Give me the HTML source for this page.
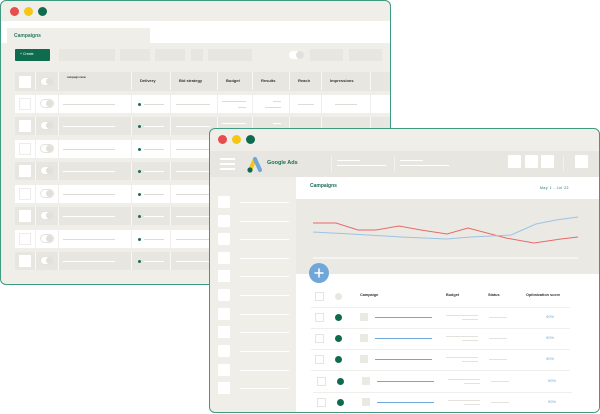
<!DOCTYPE html>
<html><head><meta charset="utf-8"><style>
*{margin:0;padding:0;box-sizing:border-box}
body{width:600px;height:414px;background:#fff;position:relative;overflow:hidden;font-family:"Liberation Sans",sans-serif}
.a{position:absolute}
.win{position:absolute;border:1.5px solid #3f9a82;border-radius:6px;overflow:hidden;background:#efeee9}
.dot{position:absolute;width:9px;height:9px;border-radius:50%}
.r{position:absolute;left:14px;width:376px;height:18px;display:flex}
.r div{height:18px;position:relative;border-right:1px solid rgba(255,255,255,.7)}
.w{background:#fff}.w div{border-right:1px solid #f0efeb}
.g{background:#e8e6e1}
.cb{position:absolute;left:4px;top:3px;width:12px;height:12px;background:#fff}
.w .cb{border:1px solid #eeece8}
.tg{position:absolute;left:4px;top:4px;width:14px;height:9px;border-radius:5px;background:#fff;border:1px solid #e4e2dc}
.tg:after{content:"";position:absolute;right:0;top:0;width:7px;height:7px;border-radius:50%;background:#e2e0da}
.ln{position:absolute;height:1px;background:#dddbd5}
.gd{position:absolute;width:3px;height:3px;border-radius:50%;background:#1b6e55;top:8px;left:6px}
.h{font-size:4px;color:#333;position:absolute;top:6px;left:8px;font-weight:bold}
.fr{position:absolute;left:296px;width:303px;height:21px}
.fr .c{position:absolute;left:18px;top:5px;width:9px;height:9px;border:1px solid #e6e4df;background:#fff}
.fr .d{position:absolute;left:38px;top:6px;width:7px;height:7px;border-radius:50%;background:#0f6b4e}
.fr .s{position:absolute;left:63px;top:5px;width:8px;height:8px;background:#ebe9e4}
.fr .b{position:absolute;left:78px;top:9px;width:57px;height:1px;background:#6fa8d8}
.fr .p{position:absolute;left:249px;top:6px;font-size:4px;color:#6fa8d8}
.fr .l1{position:absolute;left:149px;top:7px;width:32px;height:1px;background:#e4e2dd}
.fr .l2{position:absolute;left:165px;top:11px;width:16px;height:1px;background:#e4e2dd}
.fr .l3{position:absolute;left:192px;top:9px;width:18px;height:1px;background:#e4e2dd}
.fr .sep{position:absolute;left:14px;right:30px;bottom:0;height:1px;background:#efeeea}
.sb{position:absolute;left:8px;width:12px;height:12px;background:#fff;border-radius:1px}
.sl{position:absolute;left:30px;width:49px;height:1px;background:#fff}
</style></head><body>

<!-- back window -->
<div class="win" style="left:0;top:0;width:391px;height:285px">
 <div class="dot" style="left:9px;top:6px;background:#e84c4c"></div>
 <div class="dot" style="left:23px;top:6px;background:#f5c518"></div>
 <div class="dot" style="left:37px;top:6px;background:#0f6b4e"></div>
 <div class="a" style="left:0;top:20px;width:390px;height:22px;background:#fff"></div>
 <div class="a" style="left:6px;top:27px;width:143px;height:15px;background:#efeee9;font-size:5px;color:#2a7a63;padding:5px 7px;font-weight:bold">Campaigns</div>
 <div class="a" style="left:14px;top:48px;width:35px;height:12px;background:#0f6b4e;border-radius:1px;font-size:3.5px;color:#fff;padding:3px 5px">+ Create</div>
 <div class="a" style="left:58px;top:48px;width:56px;height:12px;background:#e8e6e1"></div>
 <div class="a" style="left:119px;top:48px;width:30px;height:12px;background:#e8e6e1"></div>
 <div class="a" style="left:154px;top:48px;width:30px;height:12px;background:#e8e6e1"></div>
 <div class="a" style="left:190px;top:48px;width:12px;height:12px;background:#e8e6e1"></div>
 <div class="a" style="left:207px;top:48px;width:44px;height:12px;background:#e8e6e1"></div>
 <div class="a" style="left:288px;top:50px;width:15px;height:8px;border-radius:4px;background:#fff"><div style="position:absolute;right:0;top:0;width:8px;height:8px;border-radius:50%;background:#e2e0da"></div></div>
 <div class="a" style="left:309px;top:48px;width:33px;height:12px;background:#e8e6e1"></div>
 <div class="a" style="left:348px;top:48px;width:33px;height:12px;background:#e8e6e1"></div>
 <!-- header -->
 <div class="r g" style="top:71px;height:19px">
  <div style="width:21px"><span class="cb" style="top:4px"></span></div>
  <div style="width:23px"><span class="tg" style="top:5px"></span></div>
  <div style="width:73px"><span class="h" style="font-size:2.5px;top:4px">campaign name</span></div>
  <div style="width:39px"><span class="h">Delivery</span></div>
  <div style="width:47px"><span class="h">Bid strategy</span></div>
  <div style="width:35px"><span class="h">Budget</span></div>
  <div style="width:37px"><span class="h">Results</span></div>
  <div style="width:32px"><span class="h">Reach</span></div>
  <div style="width:49px"><span class="h">Impressions</span></div>
  <div style="width:20px;border:0"></div>
 </div>
 <!-- rows -->
 <div class="r w" style="top:94px"><div style="width:21px"><span class="cb"></span></div><div style="width:23px"><span class="tg"></span></div><div style="width:73px"><span class="ln" style="left:4px;top:9px;width:52px"></span></div><div style="width:39px"><span class="gd"></span><span class="ln" style="left:12px;top:9px;width:20px"></span></div><div style="width:47px"><span class="ln" style="left:5px;top:9px;width:34px"></span></div><div style="width:35px"><span class="ln" style="left:4px;top:6px;width:24px"></span><span class="ln" style="left:20px;top:12px;width:8px"></span></div><div style="width:37px"><span class="ln" style="left:20px;top:6px;width:8px"></span><span class="ln" style="left:12px;top:12px;width:16px"></span></div><div style="width:32px"><span class="ln" style="left:8px;top:9px;width:16px"></span></div><div style="width:49px"><span class="ln" style="left:13px;top:9px;width:22px"></span></div><div style="width:20px;border:0"></div></div>
 <div class="r g" style="top:116px"><div style="width:21px"><span class="cb"></span></div><div style="width:23px"><span class="tg"></span></div><div style="width:73px"><span class="ln" style="left:4px;top:9px;width:52px;background:#fff"></span></div><div style="width:39px"><span class="gd"></span><span class="ln" style="left:12px;top:9px;width:20px;background:#fff"></span></div><div style="width:47px"><span class="ln" style="left:5px;top:9px;width:34px;background:#fff"></span></div><div style="width:35px"><span class="ln" style="left:4px;top:6px;width:24px;background:#fff"></span></div><div style="width:37px"><span class="ln" style="left:20px;top:6px;width:8px;background:#fff"></span></div><div style="width:32px"></div><div style="width:49px"></div><div style="width:20px;border:0"></div></div>
 <div class="r w" style="top:139px"><div style="width:21px"><span class="cb"></span></div><div style="width:23px"><span class="tg"></span></div><div style="width:73px"><span class="ln" style="left:4px;top:9px;width:52px"></span></div><div style="width:39px"><span class="gd"></span><span class="ln" style="left:12px;top:9px;width:20px"></span></div><div style="width:47px"><span class="ln" style="left:5px;top:9px;width:34px"></span></div><div style="width:35px"></div><div style="width:37px"></div><div style="width:32px"></div><div style="width:49px"></div><div style="width:20px;border:0"></div></div>
 <div class="r g" style="top:161px"><div style="width:21px"><span class="cb"></span></div><div style="width:23px"><span class="tg"></span></div><div style="width:73px"><span class="ln" style="left:4px;top:9px;width:52px;background:#fff"></span></div><div style="width:39px"><span class="gd"></span><span class="ln" style="left:12px;top:9px;width:20px;background:#fff"></span></div><div style="width:47px"><span class="ln" style="left:5px;top:9px;width:34px;background:#fff"></span></div><div style="width:35px"></div><div style="width:37px"></div><div style="width:32px"></div><div style="width:49px"></div><div style="width:20px;border:0"></div></div>
 <div class="r w" style="top:184px"><div style="width:21px"><span class="cb"></span></div><div style="width:23px"><span class="tg"></span></div><div style="width:73px"><span class="ln" style="left:4px;top:9px;width:52px"></span></div><div style="width:39px"><span class="gd"></span><span class="ln" style="left:12px;top:9px;width:20px"></span></div><div style="width:47px"><span class="ln" style="left:5px;top:9px;width:34px"></span></div><div style="width:35px"></div><div style="width:37px"></div><div style="width:32px"></div><div style="width:49px"></div><div style="width:20px;border:0"></div></div>
 <div class="r g" style="top:206px"><div style="width:21px"><span class="cb"></span></div><div style="width:23px"><span class="tg"></span></div><div style="width:73px"><span class="ln" style="left:4px;top:9px;width:52px;background:#fff"></span></div><div style="width:39px"><span class="gd"></span><span class="ln" style="left:12px;top:9px;width:20px;background:#fff"></span></div><div style="width:47px"><span class="ln" style="left:5px;top:9px;width:34px;background:#fff"></span></div><div style="width:35px"></div><div style="width:37px"></div><div style="width:32px"></div><div style="width:49px"></div><div style="width:20px;border:0"></div></div>
 <div class="r w" style="top:229px"><div style="width:21px"><span class="cb"></span></div><div style="width:23px"><span class="tg"></span></div><div style="width:73px"><span class="ln" style="left:4px;top:9px;width:52px"></span></div><div style="width:39px"><span class="gd"></span><span class="ln" style="left:12px;top:9px;width:20px"></span></div><div style="width:47px"><span class="ln" style="left:5px;top:9px;width:34px"></span></div><div style="width:35px"></div><div style="width:37px"></div><div style="width:32px"></div><div style="width:49px"></div><div style="width:20px;border:0"></div></div>
 <div class="r g" style="top:251px"><div style="width:21px"><span class="cb"></span></div><div style="width:23px"><span class="tg"></span></div><div style="width:73px"><span class="ln" style="left:4px;top:9px;width:52px;background:#fff"></span></div><div style="width:39px"><span class="gd"></span><span class="ln" style="left:12px;top:9px;width:20px;background:#fff"></span></div><div style="width:47px"><span class="ln" style="left:5px;top:9px;width:34px;background:#fff"></span></div><div style="width:35px"></div><div style="width:37px"></div><div style="width:32px"></div><div style="width:49px"></div><div style="width:20px;border:0"></div></div>
</div>

<!-- front window -->
<div class="win" style="left:209px;top:128px;width:391px;height:285px">
 <div class="dot" style="left:8px;top:6px;background:#e84c4c"></div>
 <div class="dot" style="left:22px;top:6px;background:#f5c518"></div>
 <div class="dot" style="left:36px;top:6px;background:#0f6b4e"></div>
 <div class="a" style="left:0;top:22px;width:391px;height:26px;background:#e8e6e1"></div>
 <div class="a" style="left:10px;top:29px;width:15px;height:1.5px;background:#fff"></div>
 <div class="a" style="left:10px;top:34px;width:15px;height:1.5px;background:#fff"></div>
 <div class="a" style="left:10px;top:39px;width:15px;height:1.5px;background:#fff"></div>
 <svg class="a" style="left:34px;top:26px" width="20" height="20" viewBox="0 0 20 20"><line x1="6" y1="15" x2="11" y2="4" stroke="#f5c518" stroke-width="4" stroke-linecap="round"/><line x1="11" y1="4" x2="16" y2="15" stroke="#6fa8d8" stroke-width="4" stroke-linecap="round"/><circle cx="6" cy="15" r="2.6" fill="#0f6b4e"/></svg>
 <div class="a" style="left:57px;top:31px;font-size:5.5px;color:#1b6e55;font-weight:bold">Google Ads</div>
 <div class="a" style="left:121px;top:27px;width:1px;height:16px;background:#f3f2ee"></div>
 <div class="a" style="left:127px;top:31px;width:23px;height:1px;background:#fff"></div>
 <div class="a" style="left:127px;top:36px;width:49px;height:1px;background:#fff"></div>
 <div class="a" style="left:184px;top:27px;width:1px;height:16px;background:#f3f2ee"></div>
 <div class="a" style="left:190px;top:31px;width:23px;height:1px;background:#fff"></div>
 <div class="a" style="left:190px;top:36px;width:49px;height:1px;background:#fff"></div>
 <div class="a" style="left:298px;top:26px;width:13px;height:13px;background:#fff;border-radius:1px"></div>
 <div class="a" style="left:315px;top:26px;width:13px;height:13px;background:#fff;border-radius:1px"></div>
 <div class="a" style="left:331px;top:26px;width:13px;height:13px;background:#fff;border-radius:1px"></div>
 <div class="a" style="left:353px;top:27px;width:1px;height:15px;background:#f3f2ee"></div>
 <div class="a" style="left:365px;top:26px;width:13px;height:13px;background:#fff;border-radius:1px"></div>
 <!-- sidebar -->
 <div class="sb" style="top:67px"></div><div class="sl" style="top:73px"></div>
 <div class="sb" style="top:86px"></div><div class="sl" style="top:92px"></div>
 <div class="sb" style="top:104px"></div><div class="sl" style="top:110px"></div>
 <div class="sb" style="top:123px"></div><div class="sl" style="top:129px"></div>
 <div class="sb" style="top:141px"></div><div class="sl" style="top:147px"></div>
 <div class="sb" style="top:160px"></div><div class="sl" style="top:166px"></div>
 <div class="sb" style="top:179px"></div><div class="sl" style="top:185px"></div>
 <div class="sb" style="top:197px"></div><div class="sl" style="top:203px"></div>
 <div class="sb" style="top:216px"></div><div class="sl" style="top:222px"></div>
 <div class="sb" style="top:235px"></div><div class="sl" style="top:241px"></div>
 <div class="sb" style="top:253px"></div><div class="sl" style="top:259px"></div>
 <!-- content -->
 <div class="a" style="left:86px;top:48px;width:304px;height:236px;background:#fff"></div>
 <div class="a" style="left:100px;top:54px;font-size:5px;color:#1b6e55;font-weight:bold">Campaigns</div>
 <div class="a" style="left:330px;top:57px;font-size:3.5px;color:#1b6e55;letter-spacing:.5px">May 1 - Jul 22</div>
 <div class="a" style="left:86px;top:70px;width:304px;height:75px;background:#ebe9e4"></div>
 <svg class="a" style="left:0;top:0" width="391" height="285">
  <polyline fill="none" stroke="#e8696b" stroke-width="1" points="103,94 126,94 148,101 166,101 189,97 211,101 237,105 258,99 296,109 324,114 351,110 368,108"/>
  <polyline fill="none" stroke="#9cc3e3" stroke-width="1" points="103,103 141,105 191,108 237,110 261,108 301,106 326,95 346,91 368,88"/>
  <line x1="103" y1="129" x2="368" y2="129" stroke="#fff" stroke-width="1"/>
  <circle cx="109" cy="144" r="10" fill="#6fa8d8"/>
  <path d="M109 139.5v9M104.5 144h9" stroke="#fff" stroke-width="1.5"/>
 </svg>
 <!-- table header -->
 <div class="fr" style="left:87px;top:158px"><span class="c"></span><span class="d" style="background:#e8e6e1"></span>
  <span class="a" style="left:63px;top:6px;font-size:3.8px;font-weight:bold;color:#333">Campaign</span>
  <span class="a" style="left:149px;top:6px;font-size:3.8px;font-weight:bold;color:#333">Budget</span>
  <span class="a" style="left:191px;top:6px;font-size:3.8px;font-weight:bold;color:#333">Status</span>
  <span class="a" style="left:229px;top:6px;font-size:3.8px;font-weight:bold;color:#333">Optimization score</span>
  <span class="sep"></span></div>
 <div class="fr" style="left:87px;top:179px"><span class="c"></span><span class="d"></span><span class="s"></span><span class="b"></span><span class="l1"></span><span class="l2"></span><span class="l3"></span><span class="p">90%</span><span class="sep"></span></div>
 <div class="fr" style="left:87px;top:200px"><span class="c"></span><span class="d"></span><span class="s"></span><span class="b"></span><span class="l1"></span><span class="l2"></span><span class="l3"></span><span class="p">90%</span><span class="sep"></span></div>
 <div class="fr" style="left:87px;top:221px"><span class="c"></span><span class="d"></span><span class="s"></span><span class="b"></span><span class="l1"></span><span class="l2"></span><span class="l3"></span><span class="p">90%</span><span class="sep"></span></div>
 <div class="fr" style="left:89px;top:243px"><span class="c"></span><span class="d"></span><span class="s"></span><span class="b"></span><span class="l1"></span><span class="l2"></span><span class="l3"></span><span class="p">90%</span><span class="sep"></span></div>
 <div class="fr" style="left:89px;top:264px"><span class="c"></span><span class="d"></span><span class="s"></span><span class="b"></span><span class="l1"></span><span class="l2"></span><span class="l3"></span><span class="p">90%</span></div>
</div>
</body></html>
